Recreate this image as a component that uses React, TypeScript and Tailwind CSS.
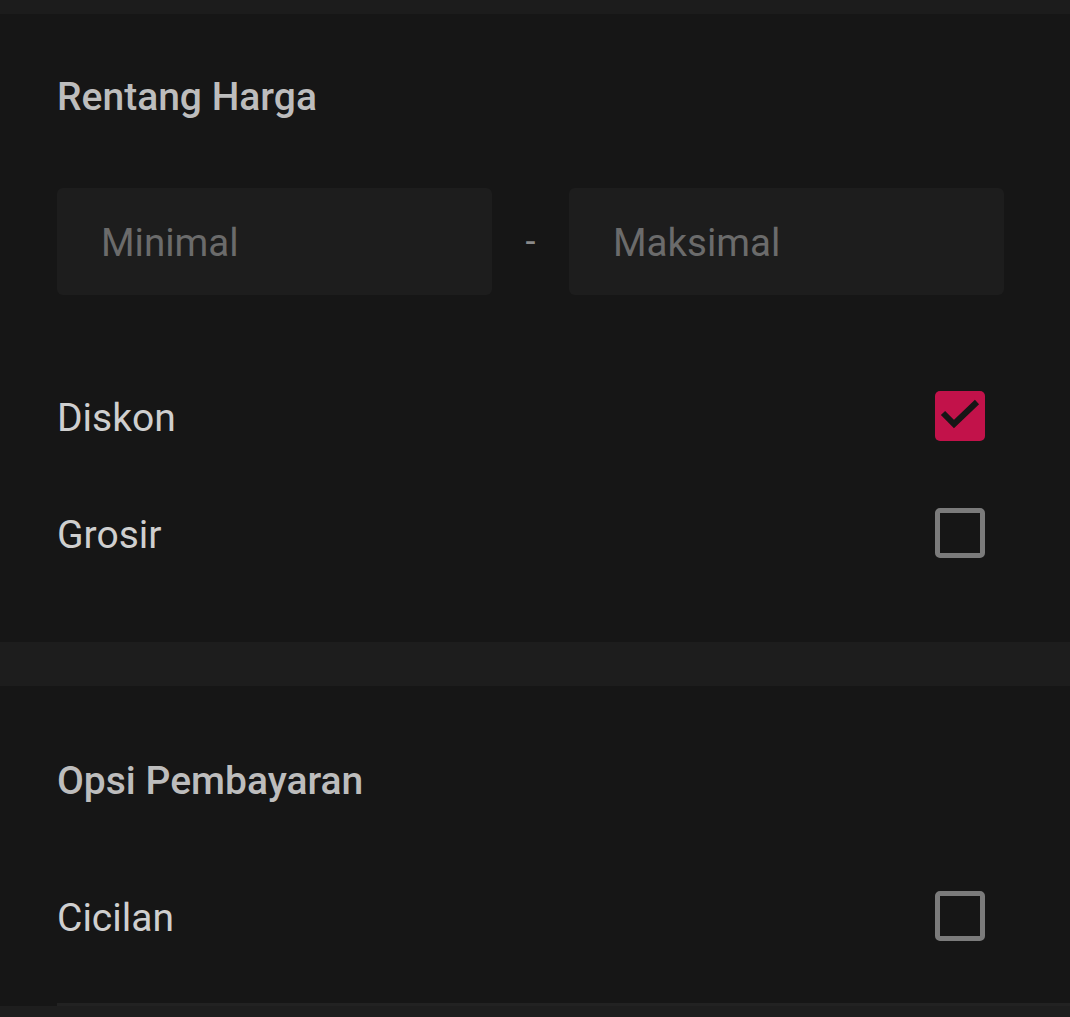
import React from 'react';

interface CheckRowProps {
  label: string;
  checked?: boolean;
}

function CheckRow({ label, checked }: CheckRowProps) {
  return (
    <div className="flex items-center justify-between h-[117px] pr-[28px]">
      <span className="text-[39px] text-[#cfcfcf] mt-[6px]">{label}</span>
      {checked ? (
        <div className="w-[50px] h-[50px] rounded-[5px] bg-[#c2124a]">
          <svg width="50" height="50" viewBox="0 0 50 50" fill="none">
            <path d="M8 22 L19 33 L42 11" stroke="#161616" strokeWidth="6" />
          </svg>
        </div>
      ) : (
        <div className="w-[50px] h-[50px] rounded-[5px] border-[5px] border-[#7b7b7b]" />
      )}
    </div>
  );
}

export default function App() {
  return (
    <div className="w-[1070px] h-[1017px] overflow-hidden bg-[#161616]" style={{ fontFamily: 'Roboto, "Noto Sans", sans-serif' }}>
      <div className="h-[14px] bg-[#1c1c1c]" />

      {/* rentang harga */}
      <div className="pl-[57px] pr-[66px] pt-[59px] h-[628px]">
        <h2 className="text-[39px] leading-[48px] font-medium text-[#bdbdbd]">Rentang Harga</h2>
        <div className="flex items-center mt-[67px]">
          <div className="flex-1 h-[107px] rounded-[6px] bg-[#1d1d1d] flex items-center pl-[44px]">
            <span className="text-[38.5px] text-[#6b6b6b] mt-[3px]">Minimal</span>
          </div>
          <div className="w-[77px] text-center text-[36px] text-[#8a8a8a]">-</div>
          <div className="flex-1 h-[107px] rounded-[6px] bg-[#1d1d1d] flex items-center pl-[44px]">
            <span className="text-[38.5px] text-[#6b6b6b] mt-[3px]">Maksimal</span>
          </div>
        </div>
        <div className="mt-[62px] mr-[-9px]">
          <CheckRow label="Diskon" checked />
          <CheckRow label="Grosir" />
        </div>
      </div>

      <div className="h-[44px] bg-[#1d1d1d]" />

      {/* opsi pembayaran */}
      <div className="pl-[57px] pr-[57px] pt-[71px]">
        <h2 className="text-[39px] leading-[48px] font-medium text-[#bdbdbd]">Opsi Pembayaran</h2>
        <div className="mt-[52px]">
          <CheckRow label="Cicilan" />
        </div>
        <div className="border-t-[3px] border-[#222222] mr-[-57px] mt-[29px]" />
      </div>
      <div className="h-[20px] bg-[#1e1e1e]" />
    </div>
  );
}
